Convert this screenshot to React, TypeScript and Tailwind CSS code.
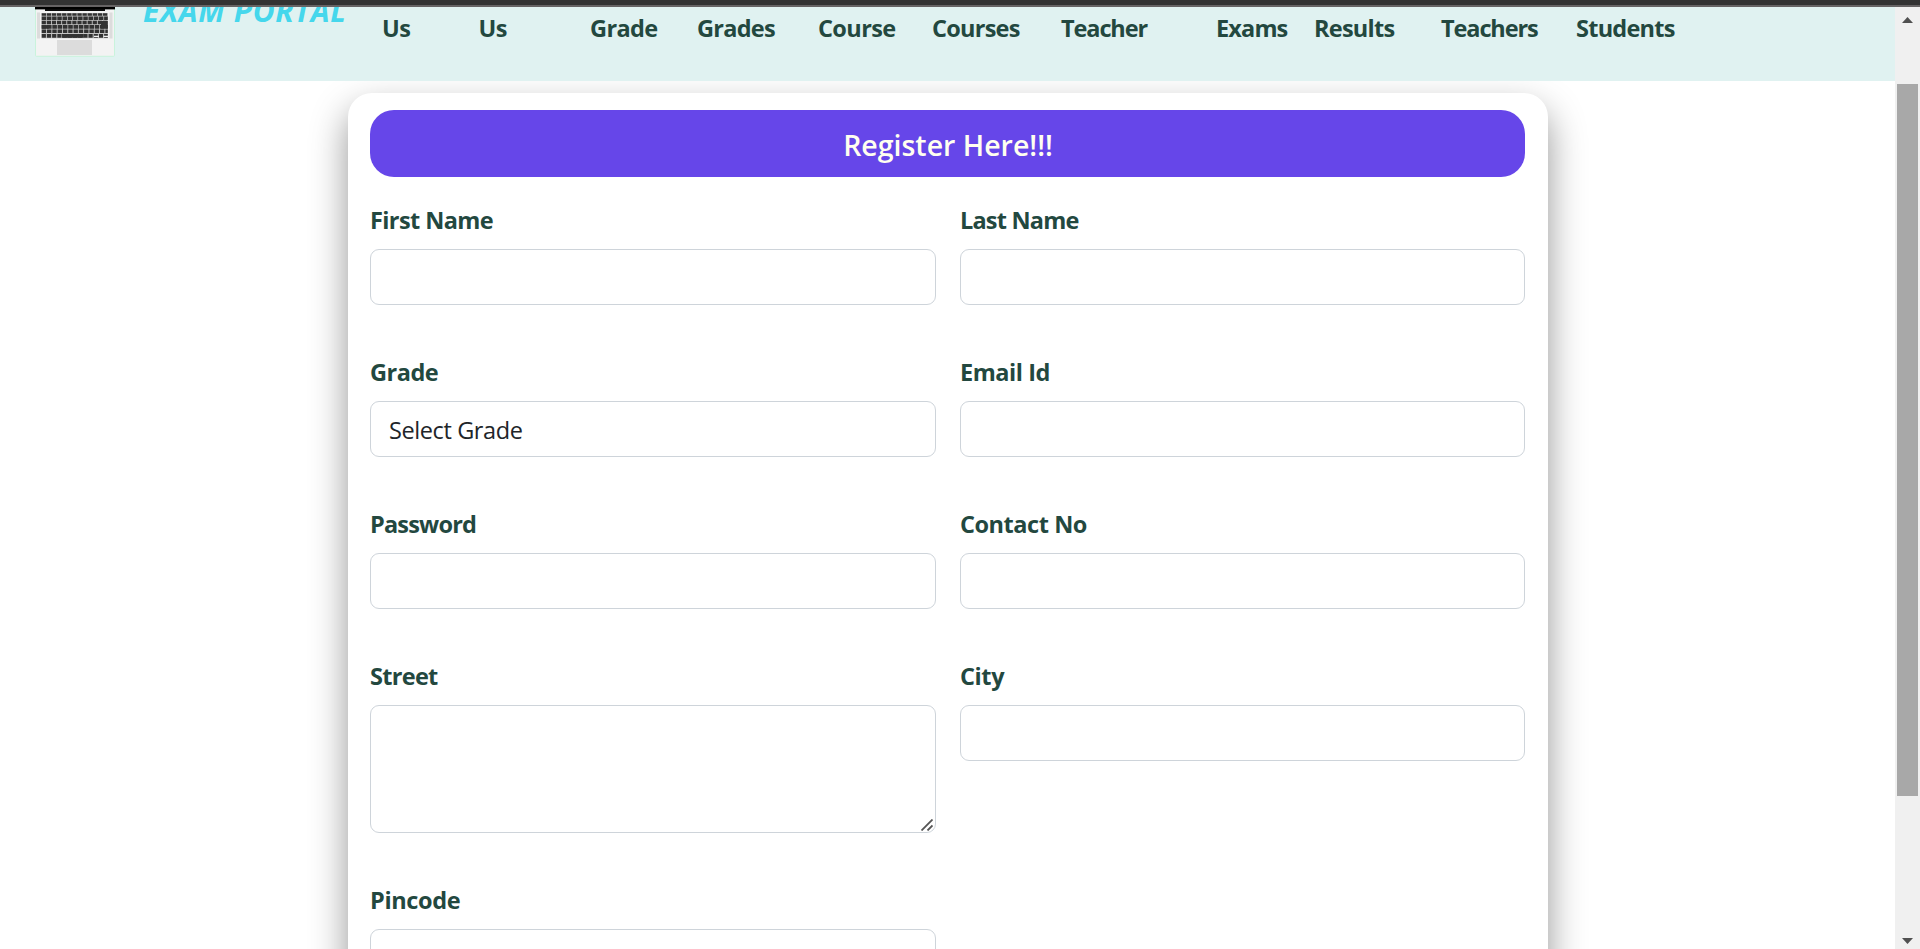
import React from "react";

const nav = [
  { t: "Us", w: "w-[96.5px] tracking-[-0.4px]" },
  { t: "Us", w: "w-[111.5px] tracking-[-0.4px]" },
  { t: "Grade", w: "w-[107px] tracking-[-0.6px]" },
  { t: "Grades", w: "w-[121px] tracking-[-0.75px]" },
  { t: "Course", w: "w-[114px] tracking-[-0.6px]" },
  { t: "Courses", w: "w-[129px] tracking-[-0.75px]" },
  { t: "Teacher", w: "w-[155px] tracking-[-1.1px]" },
  { t: "Exams", w: "w-[98px] tracking-[-0.85px]" },
  { t: "Results", w: "w-[127px] tracking-[-0.75px]" },
  { t: "Teachers", w: "w-[135px] tracking-[-1.1px]" },
  { t: "Students", w: "w-[120px] tracking-[-0.75px]" },
];

const keyRows = [
  { y: 13.2, h: 2.6, dash: "4.3 0.8" },
  { y: 16.4, h: 3.5, dash: "4.5 0.7" },
  { y: 20.8, h: 3.5, dash: "4.2 0.9" },
  { y: 25.1, h: 3.6, dash: "4.6 0.7" },
  { y: 29.5, h: 3.6, dash: "4.4 0.9" },
  { y: 34, h: 3.8, dash: "4.2 1" },
];

function Laptop() {
  return (
    <svg className="ml-[35px] h-[50px] w-20 shrink-0" viewBox="0 7 80 50">
      <rect x="0.5" y="7" width="79" height="49.3" rx="1" fill="#f3f3f3" stroke="#c9f3dc" />
      <rect x="2" y="12.5" width="3" height="26" fill="#dcdcdc" />
      <rect x="74.5" y="12.5" width="3" height="26" fill="#dcdcdc" />
      <rect x="0" y="7" width="80" height="2.4" fill="#000" />
      <rect x="10" y="9" width="60" height="2" fill="#0c0c0c" />
      <rect x="6.5" y="13" width="66.5" height="25.3" fill="#c4c4c4" />
      {keyRows.map((r) => (
        <line key={r.y} x1="6.7" x2="72.8" y1={r.y + r.h / 2} y2={r.y + r.h / 2} stroke="#323232" strokeWidth={r.h} strokeDasharray={r.dash} />
      ))}
      <rect x="6.7" y="25.1" width="7" height="3.6" fill="#323232" />
      <rect x="66" y="21" width="6.8" height="7.6" fill="#323232" />
      <rect x="27" y="34" width="21.5" height="3.8" fill="#323232" />
      <path d="M59 36.4h5M68.5 36.4h4.5" stroke="#f0f0f0" strokeWidth="1.2" />
      <rect x="22" y="40" width="35" height="15" fill="#dcdcdc" />
    </svg>
  );
}

function Field({ label, tracking, children }: { label: string; tracking: string; children?: React.ReactNode }) {
  return (
    <label className="block">
      <span className={`mb-[11.5px] block h-9 text-[23.5px] leading-9 font-bold text-[#23483f] ${tracking}`}>{label}</span>
      {children ?? <input className="block h-14 w-full rounded-[9px] border border-[#ced4da] bg-white" />}
    </label>
  );
}

export default function App() {
  return (
    <div className="flex h-[949px] w-[1920px] flex-col overflow-hidden bg-white font-['Open_Sans','Noto_Sans',sans-serif]">
      <div className="h-[7px] shrink-0 border-b-2 border-[#666364] bg-[#333]" />
      <div className="flex min-h-0 flex-1">
        <div className="flex w-[1895px] flex-col overflow-hidden">
          <header className="z-10 flex h-[74px] shrink-0 items-start overflow-hidden bg-[#e0f2f1]">
            <Laptop />
            <div className="-mt-[17px] ml-[28px] w-[239px] shrink-0 text-[30px] leading-[42px] font-bold tracking-[0.65px] whitespace-nowrap text-[#45d7ec] italic">EXAM PORTAL</div>
            <nav className="mt-[3px] flex text-[23.5px] leading-9 font-bold text-[#23483f]">
              {nav.map((n, i) => (
                <a key={i} className={`${n.w} shrink-0`}>{n.t}</a>
              ))}
            </nav>
          </header>
          <main className="mt-3 ml-[348px] h-[1000px] w-[1200px] shrink-0 rounded-t-[24px] bg-white px-[22px] pt-[17px] shadow-[0_17px_37px_rgba(0,0,0,0.42)]">
            <h1 className="h-[67px] w-[1155px] rounded-[24px] bg-[#6646e9] pl-px text-center text-[28.5px] leading-[71px] font-semibold text-[#fffff0]">Register Here!!!</h1>
            <form className="mt-[24.5px] grid w-[1155px] grid-cols-[566px_565px] gap-x-6 gap-y-[48.5px]">
              <Field label="First Name" tracking="tracking-[-0.6px]" />
              <Field label="Last Name" tracking="tracking-[-0.8px]" />
              <Field label="Grade" tracking="tracking-[-0.5px]">
                <div className="h-14 rounded-[9px] border border-[#ced4da] px-[18px] text-[23.5px] leading-[56px] tracking-[-0.4px] text-[#212529]">Select Grade</div>
              </Field>
              <Field label="Email Id" tracking="tracking-[-0.45px]" />
              <Field label="Password" tracking="tracking-[-0.8px]" />
              <Field label="Contact No" tracking="tracking-[-0.45px]" />
              <Field label="Street" tracking="tracking-[-0.7px]">
                <div className="flex h-32 items-end justify-end rounded-[9px] border border-[#ced4da]">
                  <svg className="mr-[2px] mb-[1px] h-3 w-3" viewBox="0 0 12 12" stroke="#555" strokeWidth="1.8">
                    <path d="M0.5 11.5L11.5 0.5M6.5 11.5L11.5 6.5" />
                  </svg>
                </div>
              </Field>
              <Field label="City" tracking="tracking-[-0.4px]" />
              <Field label="Pincode" tracking="tracking-[-0.35px]" />
            </form>
          </main>
        </div>
        <div className="flex w-[25px] flex-col items-center bg-[#f0f0f0] pt-[10px] pb-[5px]">
          <svg className="h-[6px] w-[11px]" viewBox="0 0 11 6"><path d="M5.5 0L11 6H0Z" fill="#505050" /></svg>
          <div className="mt-[61px] h-[712px] w-[21px] bg-[#a8a8a8]" />
          <svg className="mt-auto h-[6px] w-[11px]" viewBox="0 0 11 6"><path d="M0 0H11L5.5 6Z" fill="#505050" /></svg>
        </div>
      </div>
    </div>
  );
}
